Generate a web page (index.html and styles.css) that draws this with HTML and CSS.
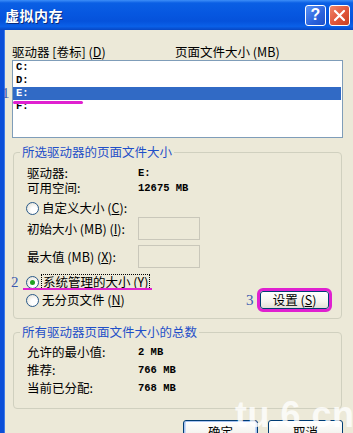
FILE: index.html
```html
<!DOCTYPE html>
<html lang="zh-CN">
<head>
    <meta charset="UTF-8" />
    <meta name="viewport" content="width=device-width, initial-scale=1.0"/>
    <title>虚拟内存</title>
    <link rel="stylesheet" href="styles.css">
</head>
<body>
    <div class="window">
        <div class="titlebar">
            <span class="title">虚拟内存</span>
            <span class="tb-btn help">?</span>
            <span class="tb-btn close">
                <svg width="13" height="13" viewBox="0 0 13 13"><path d="M2 2 L11 11 M11 2 L2 11" stroke="#fff" stroke-width="2.2" stroke-linecap="round"/></svg>
            </span>
        </div>
        <div class="frame">
            <div class="list-head">
                <span class="col-drive">驱动器 [卷标] (<u>D</u>)</span>
                <span>页面文件大小 (MB)</span>
            </div>
            <div class="listbox">
                <div class="item">C:</div>
                <div class="item">D:</div>
                <div class="item selected">E:</div>
                <div class="item">F:</div>
            </div>

            <fieldset class="group">
                <legend>所选驱动器的页面文件大小</legend>
                <div class="row info">
                    <span class="label">驱动器:</span>
                    <span class="mono">E:</span>
                </div>
                <div class="row info">
                    <span class="label">可用空间:</span>
                    <span class="mono">12675 MB</span>
                </div>
                <div class="row radio-row r-custom">
                    <span class="radio"></span>
                    <span>自定义大小 (<u>C</u>):</span>
                </div>
                <div class="row field-row r-init">
                    <span class="label">初始大小 (MB) (<u>I</u>):</span>
                    <span class="textbox"></span>
                </div>
                <div class="row field-row r-max">
                    <span class="label">最大值 (MB) (<u>X</u>):</span>
                    <span class="textbox"></span>
                </div>
                <div class="row radio-row r-system">
                    <span class="radio checked"></span>
                    <span class="focus">系统管理的大小 (<u>Y</u>)</span>
                </div>
                <div class="row radio-row r-none">
                    <span class="radio"></span>
                    <span>无分页文件 (<u>N</u>)</span>
                    <span class="btn set-btn">设置 (<u>S</u>)</span>
                </div>
            </fieldset>

            <fieldset class="group totals">
                <legend>所有驱动器页面文件大小的总数</legend>
                <div class="row total">
                    <span class="label">允许的最小值:</span>
                    <span class="mono">2 MB</span>
                </div>
                <div class="row total">
                    <span class="label">推荐:</span>
                    <span class="mono">766 MB</span>
                </div>
                <div class="row total">
                    <span class="label">当前已分配:</span>
                    <span class="mono">768 MB</span>
                </div>
            </fieldset>

            <div class="buttons">
                <span class="btn dlg-btn ok">确定</span>
                <span class="btn dlg-btn">取消</span>
            </div>
        </div>

        <!-- tutorial marks drawn over the dialog -->
        <span class="mark num-1">1</span>
        <span class="mark line-1"></span>
        <span class="mark num-2">2</span>
        <span class="mark line-2"></span>
        <span class="mark num-3">3</span>
        <span class="watermark">tu.6.cn</span>
    </div>
</body>
</html>
```

FILE: styles.css
```css
body { margin: 0; background: #ece9d8; font-family: "Noto Sans CJK SC", "Liberation Sans", sans-serif; font-size: 12.5px; line-height: 14px; color: #000; }
u { text-decoration: underline; text-underline-offset: 1px; }
.window { position: relative; width: 353px; height: 433px; overflow: hidden; display: flex; flex-direction: column; }

.titlebar { height: 30px; flex: none; display: flex; align-items: center; padding: 0 3px 0 5px; gap: 3px; background: linear-gradient(to bottom, #3d8ef8 0%, #0a5fe4 10%, #0657e0 45%, #0552db 70%, #0a60e8 88%, #0747c4 100%); }
.title { flex: 1; color: #fff; font-weight: bold; font-size: 14px; letter-spacing: 0.5px; text-shadow: 1px 1px 0 #0a2a7a; }
.tb-btn { width: 19px; height: 19px; border: 1px solid #fff; border-radius: 3px; display: flex; align-items: center; justify-content: center; color: #fff; }
.help { background: linear-gradient(135deg, #5a92f5, #2a62dc 60%, #1e50c8); font: bold 16px "Liberation Sans", sans-serif; }
.close { background: linear-gradient(135deg, #f0866a, #e0553a 55%, #c8401f); }

.frame { flex: 1; border-left: 4px solid #0b4fd8; box-shadow: inset 1px 0 0 #3c7ae8; padding: 15px 10px 0 8px; }

.list-head { display: flex; height: 14px; }
.col-drive { width: 163px; }
.listbox { margin-top: 1px; height: 76px; border: 1px solid #7f9db9; background: #fff; }
.item { height: 13px; line-height: 13px; padding-left: 3px; font: bold 10.5px "Liberation Mono", monospace; }
.item.selected { background: #316ac5; color: #fff; margin-right: 1px; }

.group { margin: 7px 1px 0 1px; border: 1px solid #d0d0bf; border-radius: 4px; padding: 6px 12px 9px 13px; }
.group legend { color: #1f4fc8; padding: 0 2px; margin-left: -7px; height: 14px; }
.row { display: flex; align-items: center; }
.row .label { width: 111px; }
.info { height: 15px; }
.mono { font: bold 10.5px "Liberation Mono", monospace; line-height: 14px; }
.radio-row { height: 14px; }
.r-custom { margin-top: 6px; margin-left: -1px; }
.r-init { margin-top: 2px; height: 23px; }
.r-max { margin-top: 5px; height: 23px; }
.r-system { margin-top: 7px; margin-left: -1px; }
.r-none { margin-top: 2px; height: 18px; margin-left: -1px; }
.textbox { width: 60px; height: 21px; border: 1px solid #c9c7ba; background: #ece9d8; }

.radio { width: 11px; height: 11px; border: 1px solid #2a5a8a; border-radius: 50%; margin-right: 3px; background: radial-gradient(circle at 65% 65%, #ffffff 30%, #dcd9cc 100%); display: flex; align-items: center; justify-content: center; flex: none; }
.radio.checked::after { content: ""; width: 5px; height: 5px; border-radius: 50%; background: #21a121; }
.focus { outline: 1px dotted #000; padding: 0 1px; }

.btn { display: flex; align-items: center; justify-content: center; border: 1px solid #003c74; border-radius: 3px; background: linear-gradient(to bottom, #ffffff, #f4f3ee 60%, #e3e0d5); }
.set-btn { margin-left: auto; width: 67px; height: 16px; outline: 3px solid #e020d0; }

.totals { margin-top: 6px; padding: 4px 12px 11px 13px; }
.total { height: 18px; }

.buttons { display: flex; justify-content: flex-end; gap: 10px; margin-top: 11px; }
.dlg-btn { width: 73px; height: 21px; }
.dlg-btn.ok { box-shadow: inset 0 0 0 1px #a8c3f0, inset 0 -1px 0 2px #c9dbf7; }

.mark { position: absolute; }
.num-1, .num-2, .num-3 { color: #3a58b0; font: 15px "Liberation Serif", serif; line-height: 15px; }
.num-1 { left: 2px; top: 86px; }
.num-2 { left: 11px; top: 275px; }
.num-3 { left: 246px; top: 293px; }
.line-1 { left: 13px; top: 101px; width: 70px; height: 3px; border-radius: 2px; background: #e020d0; }
.line-2 { left: 23px; top: 288px; width: 129px; height: 2px; background: #e020d0; }
.watermark { position: absolute; left: 235px; top: 397px; font: bold 36px "Liberation Sans", sans-serif; line-height: 36px; color: rgba(255, 255, 255, 0.78); letter-spacing: 0.5px; }
```
